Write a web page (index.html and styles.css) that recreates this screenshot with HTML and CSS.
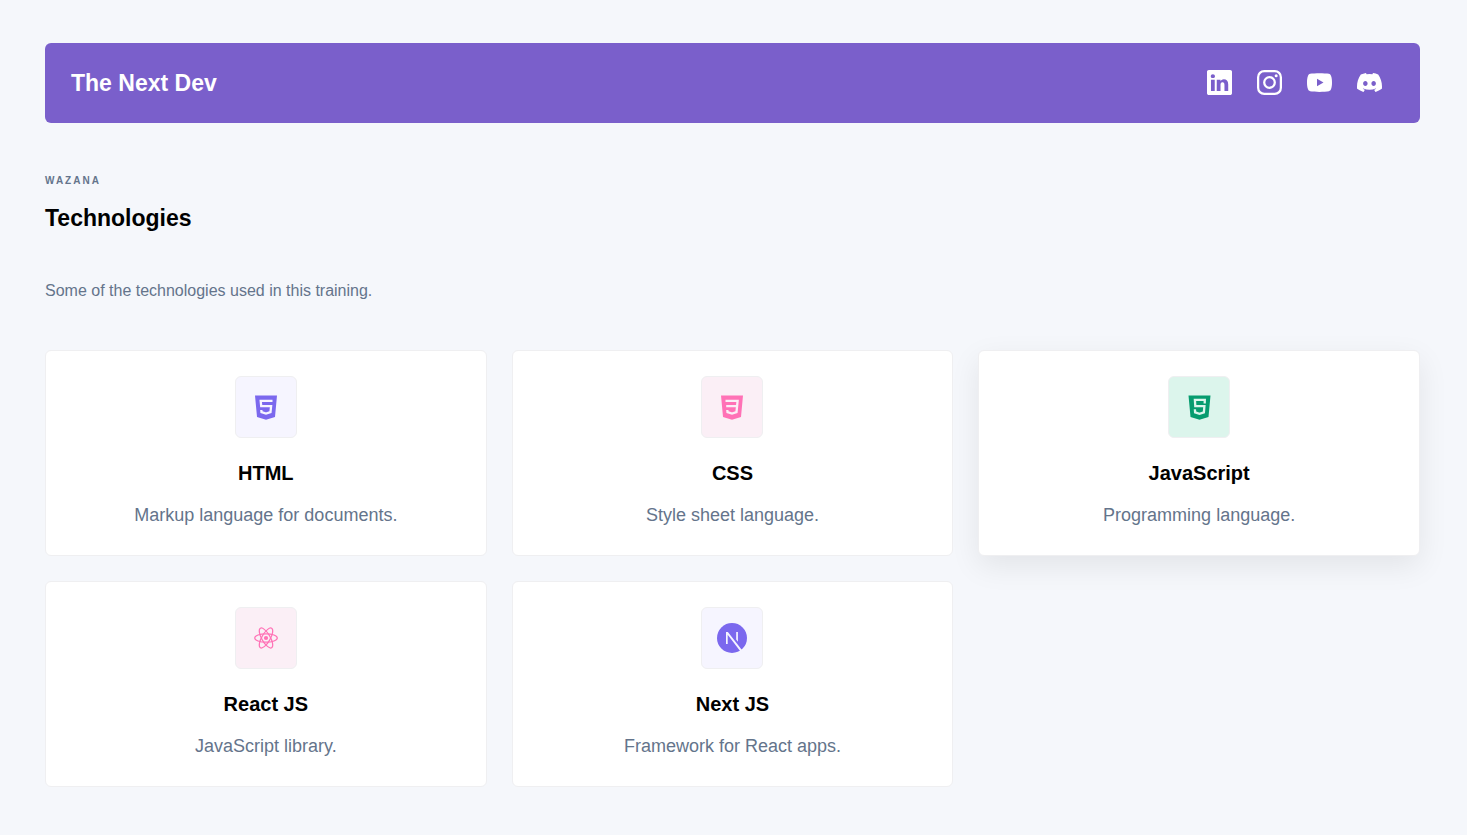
FILE: index.html
```html
<!DOCTYPE html>
<html lang="en">
<head>
<meta charset="utf-8">
<meta name="viewport" content="width=device-width, initial-scale=1">
<title>The Next Dev</title>
<link rel="stylesheet" href="styles.css">
</head>
<body>
<header class="navbar">
  <h1 class="brand">The Next Dev</h1>
  <nav class="social" aria-label="Social links">
    <a href="#linkedin" aria-label="LinkedIn"><svg viewBox="0 0 16 16" fill="currentColor"><path d="M0 1.146C0 .513.526 0 1.175 0h13.65C15.474 0 16 .513 16 1.146v13.708c0 .633-.526 1.146-1.175 1.146H1.175C.526 16 0 15.487 0 14.854zm4.943 12.248V6.169H2.542v7.225zm-1.2-8.212c.837 0 1.358-.554 1.358-1.248-.015-.709-.52-1.248-1.342-1.248S2.4 3.226 2.4 3.934c0 .694.521 1.248 1.327 1.248zm4.908 8.212V9.359c0-.216.016-.432.08-.586.173-.431.568-.878 1.232-.878.869 0 1.216.662 1.216 1.634v3.865h2.401V9.25c0-2.22-1.184-3.252-2.764-3.252-1.274 0-1.845.7-2.165 1.193v.025h-.016l.016-.025V6.169h-2.4c.03.678 0 7.225 0 7.225z"/></svg></a>
    <a href="#instagram" aria-label="Instagram"><svg viewBox="0 0 16 16" fill="none" stroke="currentColor" stroke-width="1.44"><rect x=".72" y=".72" width="14.56" height="14.56" rx="3.9"/><circle cx="8" cy="8" r="3.39"/><circle cx="12.27" cy="3.73" r=".96" fill="currentColor" stroke="none"/></svg></a>
    <a href="#youtube" aria-label="YouTube"><svg viewBox="0 0 16 16" fill="currentColor"><path fill-rule="evenodd" d="M8 2c2 0 4.9.1 6 .4.7.2 1.2.7 1.4 1.4.5 1.4.6 2.7.6 4.200s-.1 2.800-.6 4.200c-.2.7-.7 1.200-1.400 1.400-1.100.3-4 .4-6 .4s-4.900-.1-6-.4c-.7-.2-1.200-.7-1.400-1.400C.1 10.800 0 9.500 0 8s.1-2.800.6-4.200c.2-.7.7-1.200 1.400-1.400C3.100 2.100 6 2 8 2zM6.400 5.600v4.820L10.560 8z"/></svg></a>
    <a href="#discord" aria-label="Discord"><svg viewBox="0 0 16 16" fill="currentColor"><path d="M13.545 2.907a13.2 13.2 0 0 0-3.257-1.011.05.05 0 0 0-.052.025c-.141.25-.297.577-.406.833a12.2 12.2 0 0 0-3.658 0 8 8 0 0 0-.412-.833.05.05 0 0 0-.052-.025c-1.125.194-2.220.534-3.257 1.011a.04.04 0 0 0-.021.018C.356 6.024-.213 9.047.066 12.032q.003.022.021.037a13.300 13.300 0 0 0 3.995 2.020.05.05 0 0 0 .056-.019q.463-.63.818-1.329a.05.05 0 0 0-.01-.059l-.018-.011a9 9 0 0 1-1.248-.595.05.05 0 0 1-.02-.066l.015-.019q.127-.095.248-.195a.05.05 0 0 1 .051-.007c2.619 1.196 5.454 1.196 8.041 0a.05.05 0 0 1 .053.007q.121.1.248.195a.05.05 0 0 1-.004.085 8 8 0 0 1-1.249.594.05.05 0 0 0-.03.03.05.05 0 0 0 .003.041c.24.465.515.909.817 1.329a.05.05 0 0 0 .056.019 13.200 13.200 0 0 0 4.001-2.020.05.05 0 0 0 .021-.037c.334-3.451-.559-6.449-2.366-9.106a.03.03 0 0 0-.02-.019m-8.198 7.307c-.789 0-1.438-.724-1.438-1.612s.637-1.613 1.438-1.613c.807 0 1.450.73 1.438 1.613 0 .888-.637 1.612-1.438 1.612m5.316 0c-.788 0-1.438-.724-1.438-1.612s.637-1.613 1.438-1.613c.807 0 1.451.73 1.438 1.613 0 .888-.631 1.612-1.438 1.612"/></svg></a>
  </nav>
</header>
<main>
  <p class="eyebrow">WAZANA</p>
  <h2 class="heading">Technologies</h2>
  <p class="intro">Some of the technologies used in this training.</p>
  <section class="cards">
    <article class="card">
      <div class="tile violet"><svg viewBox="0 0 30 30"><path fill="currentColor" d="M4 3.500h22l-2 21.500-9 2.800L6 25z"/><path class="cut" d="M21.500 8.900H9.700l.5 5.300h9.900l-.6 6-4.500 1.400-4.500-1.400-.2-2.200"/></svg></div>
      <h3 class="title">HTML</h3>
      <p class="text">Markup language for documents.</p>
    </article>
    <article class="card">
      <div class="tile pink"><svg viewBox="0 0 30 30"><path fill="currentColor" d="M4 3.500h22l-2 21.500-9 2.800L6 25z"/><path class="cut" d="M8.500 8.900h12.100l-1.100 11.300-4.500 1.400-4.500-1.400-.2-2.200M9.200 14.200h10.500"/></svg></div>
      <h3 class="title">CSS</h3>
      <p class="text">Style sheet language.</p>
    </article>
    <article class="card raised">
      <div class="tile green"><svg viewBox="0 0 30 30"><path fill="currentColor" d="M4.500 3.500h22l-2 21.500-9 2.800-9-2.800z"/><path class="cut" d="M20.700 11.500l.1-3.700h-9.900l.4 6.400h9.100l-.5 6.200-4.400 1.500-4.400-1.500-.2-3.100"/></svg></div>
      <h3 class="title">JavaScript</h3>
      <p class="text">Programming language.</p>
    </article>
    <article class="card">
      <div class="tile pink"><svg viewBox="0 0 30 30" fill="none" stroke="currentColor" stroke-width="1.200"><ellipse cx="15" cy="15" rx="11.300" ry="4.200"/><ellipse cx="15" cy="15" rx="11.300" ry="4.200" transform="rotate(60 15 15)"/><ellipse cx="15" cy="15" rx="11.300" ry="4.200" transform="rotate(120 15 15)"/><circle cx="15" cy="15" r="2.100" fill="currentColor" stroke="none"/></svg></div>
      <h3 class="title">React JS</h3>
      <p class="text">JavaScript library.</p>
    </article>
    <article class="card">
      <div class="tile violet"><svg viewBox="0 0 30 30"><circle cx="15" cy="15" r="15" fill="currentColor"/><path fill="#f6f5ff" d="M9 9h1.900l14.200 18.200-1.600 1.300L10.700 11.800V21H9zM19.200 9h1.700v9.800l-1.700-2.200z"/></svg></div>
      <h3 class="title">Next JS</h3>
      <p class="text">Framework for React apps.</p>
    </article>
  </section>
</main>
</body>
</html>
```
FILE: styles.css
```css
* {
  box-sizing: border-box;
}

body {
  margin: 0;
  padding: 43px 47px 47px 45px;
  background: #f5f7fb;
  color: #000;
  font-family: "Liberation Sans", Arial, sans-serif;
}

h1, h2, h3, p {
  margin: 0;
}

.navbar {
  display: flex;
  align-items: center;
  justify-content: space-between;
  min-height: 80px;
  padding: 0 38px 0 26px;
  border-radius: 6px;
  background: #7a5fcb;
  color: #fff;
}

.brand {
  font-size: 23px;
  line-height: 30px;
}

.social {
  display: flex;
  gap: 25px;
  height: 26px;
}

.social a {
  color: inherit;
}

.social svg {
  display: block;
  width: 25px;
  height: 25px;
}

.eyebrow {
  margin-top: 50px;
  color: #64748b;
  font-size: 10px;
  font-weight: 700;
  line-height: 16px;
  letter-spacing: 2px;
}

.heading {
  margin-top: 14px;
  font-size: 23px;
  line-height: 30px;
}

.intro {
  margin-top: 46px;
  color: #64748b;
  font-size: 16px;
  line-height: 24px;
}

.cards {
  display: grid;
  grid-template-columns: repeat(auto-fill, minmax(360px, 1fr));
  gap: 25px;
  margin-top: 47px;
}

.card {
  display: flex;
  flex-direction: column;
  align-items: center;
  padding: 25px;
  border: 1px solid #efeff1;
  border-radius: 6px;
  background: #fff;
  text-align: center;
}

.raised {
  box-shadow: 0 10px 30px rgba(0, 0, 0, 0.08);
}

.tile {
  display: grid;
  place-items: center;
  width: 62px;
  height: 62px;
  border: 1px solid #efeff1;
  border-radius: 6px;
}

.tile svg {
  width: 30px;
  height: 30px;
}

.cut {
  fill: none;
  stroke-width: 2.3;
}

.violet {
  background: #f6f5ff;
  color: #7b68ee;
}

.violet .cut {
  stroke: #f6f5ff;
}

.pink {
  background: #fbeff6;
  color: #ff72b6;
}

.pink .cut {
  stroke: #fbeff6;
}

.green {
  background: #dcf5ec;
  color: #069c6f;
}

.green .cut {
  stroke: #dcf5ec;
}

.title {
  margin-top: 20px;
  font-size: 20px;
  line-height: 30px;
}

.text {
  margin-top: 12px;
  color: #64748b;
  font-size: 18px;
  line-height: 30px;
}
```
